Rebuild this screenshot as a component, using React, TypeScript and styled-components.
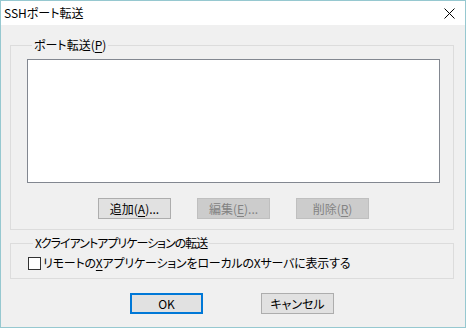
import { createGlobalStyle, styled } from "styled-components";

const GlobalStyle = createGlobalStyle`
  html, body {
    margin: 0;
    padding: 0;
    background: #ffffff;
  }
  body {
    font-family: "Noto Sans CJK JP", "Noto Sans", sans-serif;
    font-size: 12px;
    color: #000000;
  }
`;

const Window = styled.div`
  width: 466px;
  height: 328px;
  box-sizing: border-box;
  border: 1px solid #96c8d0;
  background: #f0f0f0;
  display: flex;
  flex-direction: column;
  font-feature-settings: "palt";
`;

const TitleBar = styled.div`
  height: 24px;
  flex: none;
  background: #ffffff;
  display: flex;
  align-items: center;
  justify-content: space-between;
  padding: 0 10px 0 3px;
`;

const TitleText = styled.span`
  font-size: 12px;
  line-height: 16px;
`;

const Body = styled.div`
  flex: 1;
  display: flex;
  flex-direction: column;
  padding: 12px 11px 0 9px;
`;

const GroupBox = styled.fieldset<{ $pad: string }>`
  margin: 0;
  padding: ${(p) => p.$pad};
  border: 1px solid #dcdcdc;
  min-width: 0;
  display: flex;
  flex-direction: column;
`;

const Legend = styled.legend<{ $tracking?: number }>`
  margin-left: 5px;
  padding: 0 2px;
  line-height: 16px;
  height: 16px;
  font-size: 12px;
  letter-spacing: ${(p) => p.$tracking ?? 0}px;
`;

const ListBox = styled.div`
  height: 124px;
  box-sizing: border-box;
  border: 1px solid #828790;
  background: #ffffff;
`;

const ButtonRow = styled.div<{ $gap: number }>`
  display: flex;
  justify-content: center;
  gap: ${(p) => p.$gap}px;
`;

const Button = styled.button<{ $default?: boolean }>`
  width: 73px;
  height: 21px;
  box-sizing: border-box;
  margin: 0;
  padding: 0;
  font-family: inherit;
  font-feature-settings: "palt";
  font-size: 12px;
  line-height: 16px;
  color: #000000;
  background: #e1e1e1;
  border: ${(p) => (p.$default ? "2px solid #0078d7" : "1px solid #adadad")};
  border-radius: 0;

  &:disabled {
    color: #838383;
    background: #cccccc;
    border-color: #bfbfbf;
  }
`;

const Key = styled.span`
  text-decoration: underline;
  text-underline-offset: 2px;
`;

const CheckRow = styled.label`
  display: flex;
  align-items: center;
  gap: 2px;
  height: 16px;
  line-height: 16px;
`;

const CheckBox = styled.span`
  width: 13px;
  height: 13px;
  box-sizing: border-box;
  border: 1px solid #333333;
  background: #ffffff;
  flex: none;
`;

const CheckText = styled.span`
  white-space: nowrap;
  letter-spacing: -0.2px;
`;

const Footer = styled.div`
  margin-top: 14px;
`;

const CloseIcon = () => (
  <svg width="11" height="11" viewBox="0 0 11 11">
    <path d="M0.5 0.5 L10.5 10.5 M10.5 0.5 L0.5 10.5" stroke="#000" strokeWidth="1" fill="none" />
  </svg>
);

export default function App() {
  return (
    <>
      <GlobalStyle />
      <Window>
        <TitleBar>
          <TitleText>SSHポート転送</TitleText>
          <CloseIcon />
        </TitleBar>
        <Body>
          <GroupBox $pad="6px 13px 10px 16px">
            <Legend>
              ポート転送(<Key>P</Key>)
            </Legend>
            <ListBox />
            <ButtonRow $gap={26} style={{ marginTop: 15 }}>
              <Button>
                追加(<Key>A</Key>)...
              </Button>
              <Button disabled>
                編集(<Key>E</Key>)...
              </Button>
              <Button disabled>
                削除(<Key>R</Key>)
              </Button>
            </ButtonRow>
          </GroupBox>
          <GroupBox $pad="4px 10px 7px 17px" style={{ marginTop: 5 }}>
            <Legend $tracking={-1}>Xクライアントアプリケーションの転送</Legend>
            <CheckRow>
              <CheckBox />
              <CheckText>
                リモートの<Key>X</Key>アプリケーションをローカルのXサーバに表示する
              </CheckText>
            </CheckRow>
          </GroupBox>
          <Footer>
            <ButtonRow $gap={58}>
              <Button $default>OK</Button>
              <Button>キャンセル</Button>
            </ButtonRow>
          </Footer>
        </Body>
      </Window>
    </>
  );
}
